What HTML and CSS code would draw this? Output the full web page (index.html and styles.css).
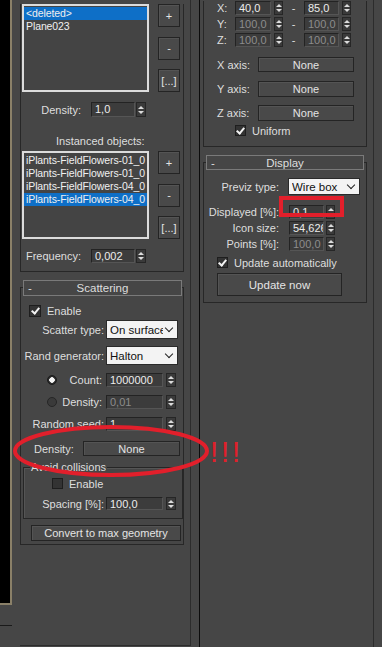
FILE: index.html
```html
<!DOCTYPE html>
<html>
<head>
	<link rel="stylesheet" href="styles.css">
</head>
<body>
<div class="screen">

	<div class="vp">
		<div class="vp-black"></div>
		<div class="vp-line"></div>
	</div>

	<div class="lp">
		<div class="ro ro-top ro-a">
			<div class="list-row">
				<div class="listbox">
					<div class="item sel">&lt;deleted&gt;</div>
					<div class="item">Plane023</div>
				</div>
				<div class="btn-col">
					<div class="btn">+</div>
					<div class="btn">-</div>
					<div class="btn">[...]</div>
				</div>
			</div>
			<div class="row row-dens">
				<div class="lbl lbl-a">Density:</div>
				<div class="fld fld-a">1,0</div><div class="arr"></div>
			</div>
			<div class="caption">Instanced objects:</div>
			<div class="list-row list-row2">
				<div class="listbox">
					<div class="item">iPlants-FieldFlowers-01_0</div>
					<div class="item">iPlants-FieldFlowers-01_0</div>
					<div class="item">iPlants-FieldFlowers-04_0</div>
					<div class="item sel">iPlants-FieldFlowers-04_0</div>
				</div>
				<div class="btn-col">
					<div class="btn">+</div>
					<div class="btn">-</div>
					<div class="btn">[...]</div>
				</div>
			</div>
			<div class="row row-freq">
				<div class="lbl lbl-a">Frequency:</div>
				<div class="fld fld-a">0,002</div><div class="arr"></div>
			</div>
		</div>

		<div class="ro ro-scat">
			<div class="ro-hd"><span class="minus">-</span><span>Scattering</span><span></span></div>
			<div class="row r-enable">
				<div class="cb on"></div><span class="cb-txt">Enable</span>
			</div>
			<div class="row r-stype">
				<div class="lbl lbl-s">Scatter type:</div>
				<div class="dd dd-s"><span class="dd-txt">On surface</span><span class="chev"></span></div>
			</div>
			<div class="row r-rand">
				<div class="lbl lbl-s">Rand generator:</div>
				<div class="dd dd-s"><span class="dd-txt">Halton</span><span class="chev"></span></div>
			</div>
			<div class="row r-count">
				<div class="lbl lbl-s lbl-radio"><span class="radio on"></span><span>Count:</span></div>
				<div class="fld fld-s">1000000</div><div class="arr arr-s"></div>
			</div>
			<div class="row r-sdens">
				<div class="lbl lbl-s lbl-radio"><span class="radio"></span><span>Density:</span></div>
				<div class="fld fld-s off">0,01</div><div class="arr arr-s"></div>
			</div>
			<div class="row r-seed">
				<div class="lbl lbl-s">Random seed:</div>
				<div class="fld fld-s">1</div><div class="arr arr-s"></div>
			</div>
			<div class="row r-none">
				<div class="lbl-n">Density:</div>
				<div class="btn btn-none">None</div>
			</div>
			<div class="group">
				<span class="group-lbl">Avoid collisions</span>
				<div class="row g-enable">
					<div class="cb"></div><span class="cb-txt">Enable</span>
				</div>
				<div class="row g-spacing">
					<div class="lbl lbl-g">Spacing [%]:</div>
					<div class="fld fld-s">100,0</div><div class="arr arr-s"></div>
				</div>
			</div>
			<div class="btn btn-convert">Convert to max geometry</div>
		</div>
	</div>

	<div class="rp">
		<div class="ro ro-top ro-b">
			<div class="row xyz xyz-first">
				<div class="lbl-x">X:</div>
				<div class="fld fld-x">40,0</div><div class="arr arr-x"></div>
				<div class="dash">-</div>
				<div class="fld fld-x2">85,0</div><div class="arr arr-x"></div>
			</div>
			<div class="row xyz">
				<div class="lbl-x">Y:</div>
				<div class="fld fld-x off">100,0</div><div class="arr arr-x"></div>
				<div class="dash">-</div>
				<div class="fld fld-x2 off">100,0</div><div class="arr arr-x"></div>
			</div>
			<div class="row xyz">
				<div class="lbl-x">Z:</div>
				<div class="fld fld-x off">100,0</div><div class="arr arr-x"></div>
				<div class="dash">-</div>
				<div class="fld fld-x2 off">100,0</div><div class="arr arr-x"></div>
			</div>
			<div class="row axis axis-x">
				<div class="lbl-ax">X axis:</div>
				<div class="btn btn-ax">None</div>
			</div>
			<div class="row axis axis-y">
				<div class="lbl-ax">Y axis:</div>
				<div class="btn btn-ax">None</div>
			</div>
			<div class="row axis axis-z">
				<div class="lbl-ax">Z axis:</div>
				<div class="btn btn-ax">None</div>
			</div>
			<div class="row r-uniform">
				<div class="cb on"></div><span class="cb-txt">Uniform</span>
			</div>
		</div>

		<div class="ro ro-disp">
			<div class="ro-hd ro-hd-d"><span class="minus">-</span><span>Display</span><span></span></div>
			<div class="row d-previz">
				<div class="lbl lbl-d">Previz type:</div>
				<div class="dd dd-d"><span class="dd-txt">Wire box</span><span class="chev"></span></div>
			</div>
			<div class="row d-shown">
				<div class="lbl lbl-d">Displayed [%]:</div>
				<div class="fld fld-d">0,1</div><div class="arr"></div>
			</div>
			<div class="row d-icon">
				<div class="lbl lbl-d">Icon size:</div>
				<div class="fld fld-d">54,626</div><div class="arr"></div>
			</div>
			<div class="row d-points">
				<div class="lbl lbl-d">Points [%]:</div>
				<div class="fld fld-d off">100,0</div><div class="arr"></div>
			</div>
			<div class="row d-auto">
				<div class="cb on"></div><span class="cb-txt">Update automatically</span>
			</div>
			<div class="btn btn-update">Update now</div>
		</div>
	</div>

	<svg class="marks" width="382" height="647" viewBox="0 0 382 647">
		<ellipse cx="111" cy="451" rx="96" ry="24" fill="none" stroke="#e21f2b" stroke-width="4"/>
		<rect x="281" y="198" width="61" height="17" fill="none" stroke="#e21f2b" stroke-width="4"/>
	</svg>
	<span class="bang">!!!</span>
</div>
</body>
</html>
```

FILE: styles.css
```css
html, body {
	margin: 0;
	padding: 0;
	background-color: #464646;
	overflow: hidden;
}

.screen {
	position: relative;
	display: flex;
	width: 382px;
	height: 647px;
	font-family: "Liberation Sans", Arial, sans-serif;
	font-size: 11px;
	color: #dedede;
}

/* viewport edge on the far left */
.vp {
	width: 12px;
	flex: none;
}
.vp-black {
	height: 603px;
	background-color: #000;
	border-right: 2px solid #8a8068;
	border-bottom: 2px solid #8a8068;
}
.vp-line {
	margin-top: 20px;
	height: 1px;
	background-color: #1a1a1a;
}

/* command panel columns */
.lp {
	width: 171px;
	height: 646px;
	margin-left: 8px;
	box-sizing: border-box;
	border-right: 1px solid #2c2c2c;
	border-bottom: 1px solid #2c2c2c;
	flex: none;
}
.rp {
	width: 175px;
	height: 647px;
	margin-left: 8px;
	box-sizing: border-box;
	border-left: 1px solid #0c0c0c;
	border-right: 1px solid #2c2c2c;
	flex: none;
}

.ro {
	box-sizing: border-box;
	width: 164px;
	border: 1px solid #272727;
}
.ro-top {
	border-top: none;
}
.ro-a {
	padding-bottom: 8px;
}
.ro-b {
	margin-left: 3px;
	height: 146px;
}

.ro-hd {
	display: grid;
	grid-template-columns: 1fr auto 1fr;
	align-items: center;
	height: 16px;
	box-sizing: border-box;
	margin: -8px 1px 0 2px;
	border: 1px solid #7a7a7a;
	background-color: #464646;
	font-size: 11.5px;
}
.ro-hd .minus {
	padding-left: 4px;
}

.row {
	display: flex;
	align-items: center;
}
.lbl {
	flex: none;
	box-sizing: border-box;
	text-align: right;
	white-space: nowrap;
}

/* list boxes */
.list-row {
	display: flex;
	margin: 4px 0 0 1px;
}
.list-row2 {
	margin-top: 3px;
}
.listbox {
	width: 127px;
	height: 88px;
	box-sizing: border-box;
	border: 2px solid #dcdcdc;
	background-color: #444;
	padding-top: 1px;
	overflow: hidden;
}
.item {
	height: 13px;
	line-height: 13px;
	padding-left: 2px;
	font-size: 10.5px;
	letter-spacing: -0.1px;
	white-space: nowrap;
	color: #f0f0f0;
}
.item.sel {
	background-color: #0e6fc7;
}
.btn-col {
	display: flex;
	flex-direction: column;
	justify-content: space-between;
	margin-left: 9px;
	width: 22px;
}

.btn {
	display: flex;
	align-items: center;
	justify-content: center;
	box-sizing: border-box;
	height: 23px;
	border: 1px solid #242424;
	box-shadow: inset 1px 1px 0 #545454;
	background-color: #494949;
	color: #e4e4e4;
	white-space: nowrap;
}

/* spinners */
.fld {
	box-sizing: border-box;
	height: 14px;
	line-height: 12px;
	padding: 0 3px;
	background-color: #3c3c3c;
	border: 1px solid #232323;
	border-right-color: #555;
	border-bottom-color: #555;
	color: #ececec;
	white-space: nowrap;
	overflow: hidden;
	flex: none;
}
.fld.off {
	color: #8c8c8c;
}
.arr {
	display: flex;
	flex-direction: column;
	align-items: center;
	justify-content: center;
	gap: 2px;
	box-sizing: border-box;
	width: 10px;
	height: 14px;
	margin-left: 1px;
	background-color: #3a3a3a;
	border: 1px solid #262626;
	flex: none;
}
.arr::before,
.arr::after {
	content: "";
	border-left: 3px solid transparent;
	border-right: 3px solid transparent;
}
.arr::before {
	border-bottom: 3px solid #dcdcdc;
}
.arr::after {
	border-top: 3px solid #dcdcdc;
}
.arr-s {
	margin-left: 3px;
}

/* upper left rollout */
.row-dens {
	margin-top: 10px;
	height: 15px;
}
.row-dens .fld,
.row-dens .arr {
	height: 15px;
}
.lbl-a {
	width: 70px;
	padding-right: 10px;
}
.fld-a {
	width: 44px;
}
.caption {
	margin: 17px 0 0 35px;
	height: 14px;
	line-height: 14px;
}
.row-freq {
	margin-top: 10px;
	height: 14px;
}

/* scattering rollout */
.ro-scat {
	margin-top: 15px;
	padding-bottom: 3px;
}
.r-enable {
	margin-top: 9px;
	height: 12px;
	padding-left: 8px;
}
.cb {
	display: flex;
	align-items: center;
	justify-content: center;
	box-sizing: border-box;
	width: 11px;
	height: 11px;
	background-color: #333;
	border: 1px solid #1e1e1e;
	flex: none;
}
.cb.on::after {
	content: "";
	width: 3px;
	height: 6px;
	margin-top: -2px;
	border-right: 2px solid #f2f2f2;
	border-bottom: 2px solid #f2f2f2;
	transform: rotate(40deg);
}
.cb-txt {
	margin-left: 6px;
	white-space: nowrap;
}
.r-enable .cb {
	width: 12px;
	height: 12px;
}

.lbl-s {
	width: 85px;
	padding-right: 2px;
}
.r-stype {
	margin-top: 3px;
	height: 19px;
}
.r-rand {
	margin-top: 7px;
	height: 19px;
}
.dd {
	display: flex;
	align-items: center;
	box-sizing: border-box;
	height: 100%;
	background-color: #f3f3f3;
	border: 1px solid #2a2a2a;
	color: #111;
	padding: 0 4px 0 3px;
	font-size: 11.5px;
	flex: none;
}
.dd-txt {
	flex: 1;
	overflow: hidden;
	white-space: nowrap;
}
.chev {
	width: 5px;
	height: 5px;
	margin: -3px 1px 0 3px;
	border-right: 1px solid #222;
	border-bottom: 1px solid #222;
	transform: rotate(45deg);
	flex: none;
}
.dd-s {
	width: 72px;
}
.r-count {
	margin-top: 8px;
	height: 14px;
}
.r-sdens,
.r-seed {
	margin-top: 8px;
	height: 14px;
}
.lbl-radio {
	display: flex;
	align-items: center;
	justify-content: space-between;
	padding-left: 26px;
	padding-right: 4px;
}
.radio {
	box-sizing: border-box;
	width: 10px;
	height: 10px;
	border-radius: 50%;
	background-color: #3a3a3a;
	border: 1px solid #262626;
}
.radio.on {
	background: radial-gradient(circle, #f4f4f4 0 2.5px, #2a2a2a 3px);
	border-color: #1a1a1a;
}
.fld-s {
	width: 57px;
}
.r-none {
	margin-top: 10px;
	height: 15px;
}
.lbl-n {
	width: 62px;
	padding-left: 13px;
	box-sizing: border-box;
	flex: none;
}
.btn-none {
	width: 97px;
	height: 15px;
}

.group {
	margin: 11px 0 0 2px;
	width: 160px;
	box-sizing: border-box;
	border: 1px solid #262626;
	box-shadow: inset 1px 1px 0 #555;
	padding-bottom: 8px;
}
.group-lbl {
	display: block;
	width: max-content;
	margin: -7px 0 0 6px;
	padding: 0 1px;
	line-height: 13px;
	background-color: #464646;
}
.g-enable {
	margin-top: 4px;
	height: 11px;
	padding-left: 28px;
}
.g-spacing {
	margin-top: 8px;
	height: 13px;
}
.g-spacing .fld,
.g-spacing .arr {
	height: 13px;
}
.lbl-g {
	width: 82px;
	padding-right: 2px;
}
.btn-convert {
	margin: 6px 0 0 10px;
	width: 150px;
	height: 16px;
}

/* right column, top rollout */
.xyz {
	height: 14px;
	margin-top: 2px;
	padding-left: 13px;
}
.xyz-first {
	margin-top: 1px;
}
.lbl-x {
	width: 18px;
	flex: none;
}
.fld-x {
	width: 36px;
}
.fld-x2 {
	width: 35px;
}
.arr-x {
	margin-left: 3px;
	width: 9px;
}
.dash {
	width: 21px;
	text-align: center;
	flex: none;
}
.axis {
	padding-left: 13px;
	height: 16px;
}
.axis-x {
	margin-top: 10px;
	height: 15px;
}
.axis-y {
	margin-top: 9px;
}
.axis-z {
	margin-top: 8px;
}
.lbl-ax {
	width: 41px;
	flex: none;
	white-space: nowrap;
}
.btn-ax {
	width: 96px;
	height: 100%;
}
.r-uniform {
	margin-top: 4px;
	height: 11px;
	padding-left: 31px;
}

/* display rollout */
.ro-disp {
	margin: 15px 0 0 3px;
	padding-bottom: 6px;
}
.ro-hd-d {
	height: 15px;
	margin: -8px 2px 0 2px;
}
.lbl-d {
	width: 85px;
	padding-right: 10px;
}
.d-previz {
	margin-top: 8px;
	height: 17px;
}
.dd-d {
	width: 72px;
	margin-left: -1px;
}
.d-shown {
	margin-top: 10px;
	height: 14px;
}
.d-icon,
.d-points {
	margin-top: 2px;
	height: 14px;
}
.fld-d {
	width: 35px;
}
.ro-disp .arr {
	margin-left: 2px;
	width: 9px;
}
.d-auto {
	margin-top: 6px;
	height: 11px;
	padding-left: 13px;
}
.btn-update {
	margin: 5px 0 0 13px;
	width: 125px;
	font-size: 11.5px;
}

/* red annotations drawn over the screenshot */
.marks {
	position: absolute;
	left: 0;
	top: 0;
	pointer-events: none;
}
.bang {
	position: absolute;
	left: 210px;
	top: 436px;
	font-size: 29px;
	line-height: 32px;
	letter-spacing: 3px;
	color: #e21f2b;
}
```
